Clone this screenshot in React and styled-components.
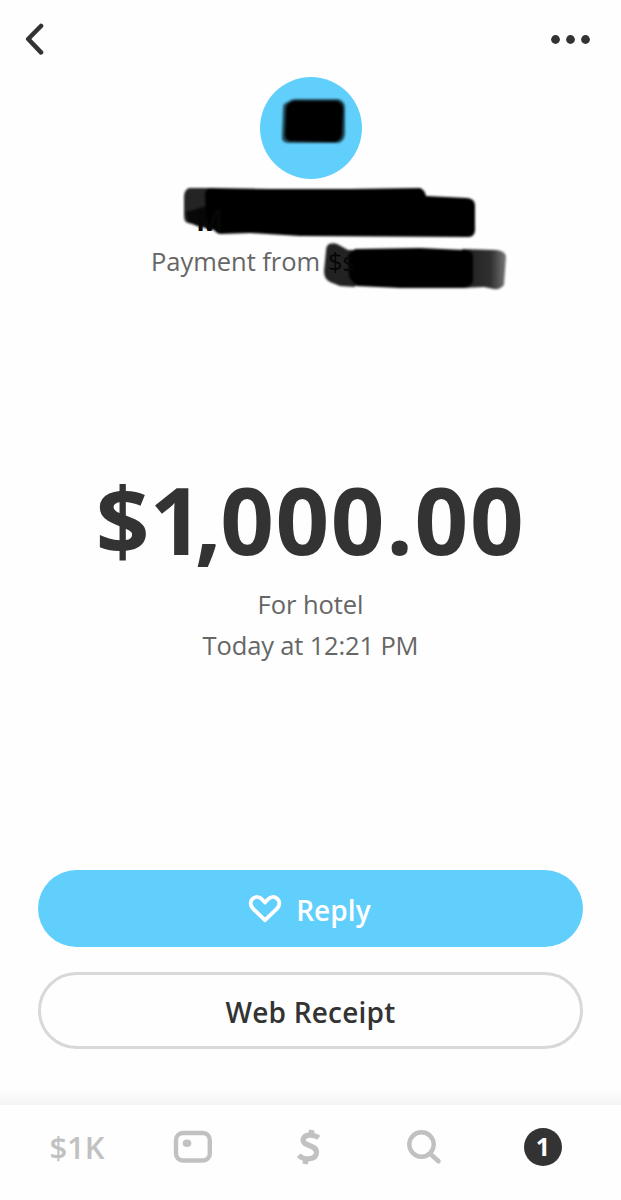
import styled, { createGlobalStyle } from "styled-components";

export default function App() {
  return (
    <Screen>
      <GlobalStyle />
      <Header>
        <IconButton aria-label="Back">
          <svg width="20" height="32" viewBox="0 0 20 32" fill="none">
            <path d="M17 3L4.2 16L17 29.4" stroke="#333" strokeWidth="4.6" strokeLinecap="round" strokeLinejoin="round" />
          </svg>
        </IconButton>
        <IconButton aria-label="More">
          <svg width="40" height="10" viewBox="0 0 40 10" fill="#333">
            <circle cx="5.5" cy="5.5" r="4.4" />
            <circle cx="20.5" cy="5.5" r="4.4" />
            <circle cx="35.5" cy="5.5" r="4.4" />
          </svg>
        </IconButton>
      </Header>
      <Profile>
        <Avatar>
          <AvatarMark />
        </Avatar>
        <Name>
          <NameMark />
          <Covered $size={29} $weight={700}>M</Covered>
        </Name>
        <Source>
          <SourceText>Payment from</SourceText>
          <Handle>
            <HandleMark />
            <Covered $size={25.5} $weight={400}>$s</Covered>
          </Handle>
        </Source>
      </Profile>
      <Payment>
        <Amount>
          <Digit $spacing={0}>$</Digit>
          <Digit $spacing={-8.5}>1</Digit>
          <Digit $spacing={-1.4}>,</Digit>000.00
        </Amount>
        <Detail $spacing={-0.05}>For hotel</Detail>
        <Detail $spacing={-0.15}>Today at 12:21 PM</Detail>
      </Payment>
      <Actions>
        <Button $primary>
          <Heart width="34" height="30" viewBox="0 0 34 30" fill="none">
            <path
              d="M17 26.2L5 14.6C1.8 11.2 2 7 4.7 4.7C7.6 2.2 11.6 2.6 14 5.2L17 8.5L20 5.2C22.4 2.6 26.4 2.2 29.3 4.7C32 7 32.2 11.2 29 14.6Z"
              stroke="#fff"
              strokeWidth="3.8"
              strokeLinejoin="round"
            />
          </Heart>
          <Label $spacing={0.1}>Reply</Label>
        </Button>
        <Button>
          <Label $spacing={0.2}>Web Receipt</Label>
        </Button>
      </Actions>
      <TabBar>
        <Balance>$1K</Balance>
        <Tab $width={116}>
          <svg width="40" height="34" viewBox="0 0 40 34" fill="none">
            <rect x="3" y="3" width="33.8" height="27.5" rx="6.8" stroke="#c1c1c1" strokeWidth="4.4" />
            <ellipse cx="14" cy="13.2" rx="4.3" ry="3.8" fill="#c1c1c1" />
          </svg>
        </Tab>
        <Tab $width={115}>
          <svg width="26" height="36" viewBox="0 0 26 36" fill="none" stroke="#c1c1c1">
            <path
              d="M22.7 8.8C18.8 5.8 9.5 4.3 7.5 9.5C4.5 17.5 20.8 15.2 20.5 23.3C20.2 31.5 7.5 31.3 2.7 26.2"
              strokeWidth="5.2"
            />
            <path d="M15.8 1L14.9 6M10 30L9.1 35" strokeWidth="5.6" />
          </svg>
        </Tab>
        <Tab $width={116}>
          <svg width="36" height="36" viewBox="0 0 36 36" fill="none" stroke="#c1c1c1">
            <circle cx="15.5" cy="15.5" r="12.2" strokeWidth="4.4" />
            <path d="M25 25.5L32.5 32.2" strokeWidth="4.6" strokeLinecap="round" />
          </svg>
        </Tab>
        <Tab $width={122}>
          <Badge>1</Badge>
        </Tab>
      </TabBar>
    </Screen>
  );
}

function AvatarMark() {
  return (
    <Mark $left={19} $top={19} width="68" height="50" viewBox="279 96 68 50">
      <path
        d="M288 102Q291 99 296 99L338 99Q345 101 345 108L345 135Q343 143 337 143L288 143Q281 142 282 136L283 108Q283 103 288 102Z"
        opacity="0.65"
      />
      <path d="M291 102Q294 100 299 101L337 101Q343 103 343 109L342 135Q340 142 334 142L290 141Q285 140 285 135L286 109Q286 104 291 102Z" />
    </Mark>
  );
}

function NameMark() {
  return (
    <Mark $left={0} $top={0} width="296" height="54" viewBox="182 185 296 54">
      <path
        d="M189 188L213 188L213 228Q205 228 197 225L188 223Q184 222 184 216L184 197Q184 190 189 188Z"
        fill="#242424"
      />
      <path d="M186 212L206 206L222 232L197 226L188 222Z" fill="#080808" />
      <path
        d="M210 188L270 189L350 189L420 188Q425 190 426 196L467 198Q475 199 475 205L475 231Q474 237 468 237L300 236L250 233L220 234Q216 233 214 230L206 222L205 194Q206 188 210 188Z"
      />
    </Mark>
  );
}

function HandleMark() {
  return (
    <Mark $left={0} $top={0} width="186" height="52" viewBox="322 241 186 52">
      <path
        d="M329 244Q335 242 339 245L348 250L355 250L355 287L340 286L330 282Q324 279 324 271L326 251Q326 246 329 244Z"
        fill="#222"
      />
      <path d="M462 249L496 250Q506 251 506 257L504 285Q500 290 494 289L484 287L462 288Z" fill="url(#fade)" />
      <path d="M355 249L420 248L464 250Q473 250 473 257L473 281Q471 287 464 288L400 288L356 286L349 277L348 255Z" />
      <defs>
        <linearGradient id="fade">
          <stop offset="0" stopColor="#1e1e1e" />
          <stop offset="0.65" stopColor="#303030" />
          <stop offset="1" stopColor="#777" />
        </linearGradient>
      </defs>
    </Mark>
  );
}

const GlobalStyle = createGlobalStyle`
  * {
    box-sizing: border-box;
  }
  body {
    margin: 0;
    background-color: #fefefe;
    font-family: "Open Sans", "Noto Sans", sans-serif;
  }
  svg {
    display: block;
  }
`;
const Screen = styled.div`
  width: 621px;
  height: 1200px;
  display: flex;
  flex-direction: column;
  background-color: #fefefe;
  overflow: hidden;
`;
const Header = styled.header`
  height: 77px;
  padding: 1px 31px 0 24px;
  display: flex;
  align-items: center;
  justify-content: space-between;
`;
const IconButton = styled.button`
  padding: 0;
  border: none;
  background: none;
  height: 80px;
  display: flex;
  align-items: center;
`;
const Profile = styled.section`
  height: 390px;
  display: flex;
  flex-direction: column;
  align-items: center;
`;
const Avatar = styled.div`
  position: relative;
  width: 102px;
  height: 102px;
  border-radius: 50%;
  background-color: #61cffb;
`;
const Mark = styled.svg`
  position: absolute;
  left: ${(props) => props.$left}px;
  top: ${(props) => props.$top}px;
  filter: blur(0.8px);
`;
const Name = styled.h1`
  position: relative;
  width: 296px;
  height: 54px;
  margin: 6px 0 0 39px;
  padding: 20px 0 0 14px;
`;
const Source = styled.div`
  display: flex;
  align-items: flex-start;
  width: 357px;
  height: 54px;
  margin: 2px 0 0 38px;
`;
const SourceText = styled.p`
  margin: 5px 0 0;
  width: 171px;
  font-size: 25.5px;
  line-height: 30px;
  letter-spacing: -0.03px;
  white-space: nowrap;
  color: #666;
`;
const Handle = styled.div`
  position: relative;
  width: 186px;
  height: 52px;
  padding: 5px 0 0 6px;
`;
const Covered = styled.span`
  position: relative;
  display: block;
  font-size: ${(props) => props.$size}px;
  font-weight: ${(props) => props.$weight};
  line-height: 30px;
  color: #060606;
`;
const Payment = styled.section`
  height: 403px;
  display: flex;
  flex-direction: column;
  align-items: center;
`;
const Amount = styled.p`
  margin: 0;
  height: 117px;
  display: flex;
  font-size: 94px;
  font-weight: 700;
  line-height: 104px;
  letter-spacing: 1.6px;
  color: #333;
`;
const Digit = styled.span`
  letter-spacing: ${(props) => props.$spacing}px;
`;
const Detail = styled.p`
  margin: 0;
  font-size: 25.5px;
  line-height: 41px;
  letter-spacing: ${(props) => props.$spacing}px;
  color: #666;
`;
const Actions = styled.div`
  height: 220px;
  padding: 0 38px;
  display: flex;
  flex-direction: column;
  gap: 25px;
`;
const Button = styled.button`
  width: 100%;
  height: 77px;
  padding: 2px 0 0;
  border: ${(props) => (props.$primary ? "none" : "3px solid #d8d8d8")};
  border-radius: 39px;
  background-color: ${(props) => (props.$primary ? "#61cffb" : "#fefefe")};
  color: ${(props) => (props.$primary ? "#fff" : "#333")};
  display: flex;
  justify-content: center;
  align-items: center;
  gap: 14px;
`;
const Heart = styled.svg`
  margin: 0 0 2px -2px;
`;
const Label = styled.span`
  font-family: "Open Sans", "Noto Sans", sans-serif;
  font-size: 28px;
  font-weight: 600;
  line-height: 36px;
  letter-spacing: ${(props) => props.$spacing}px;
`;
const TabBar = styled.nav`
  height: 110px;
  padding: 15px 0 12px 19px;
  display: flex;
  align-items: center;
  background: linear-gradient(#fdfdfd 0, #f4f4f4 15px, #fefefe 15px);
`;
const Tab = styled.div`
  width: ${(props) => props.$width}px;
  display: flex;
  justify-content: center;
`;
const Balance = styled.span`
  width: 116px;
  text-align: center;
  font-size: 31px;
  font-weight: 600;
  color: #c1c1c1;
`;
const Badge = styled.span`
  width: 38px;
  height: 38px;
  border-radius: 50%;
  background-color: #333;
  color: #fff;
  font-size: 25px;
  font-weight: 700;
  line-height: 37px;
  text-align: center;
`;
